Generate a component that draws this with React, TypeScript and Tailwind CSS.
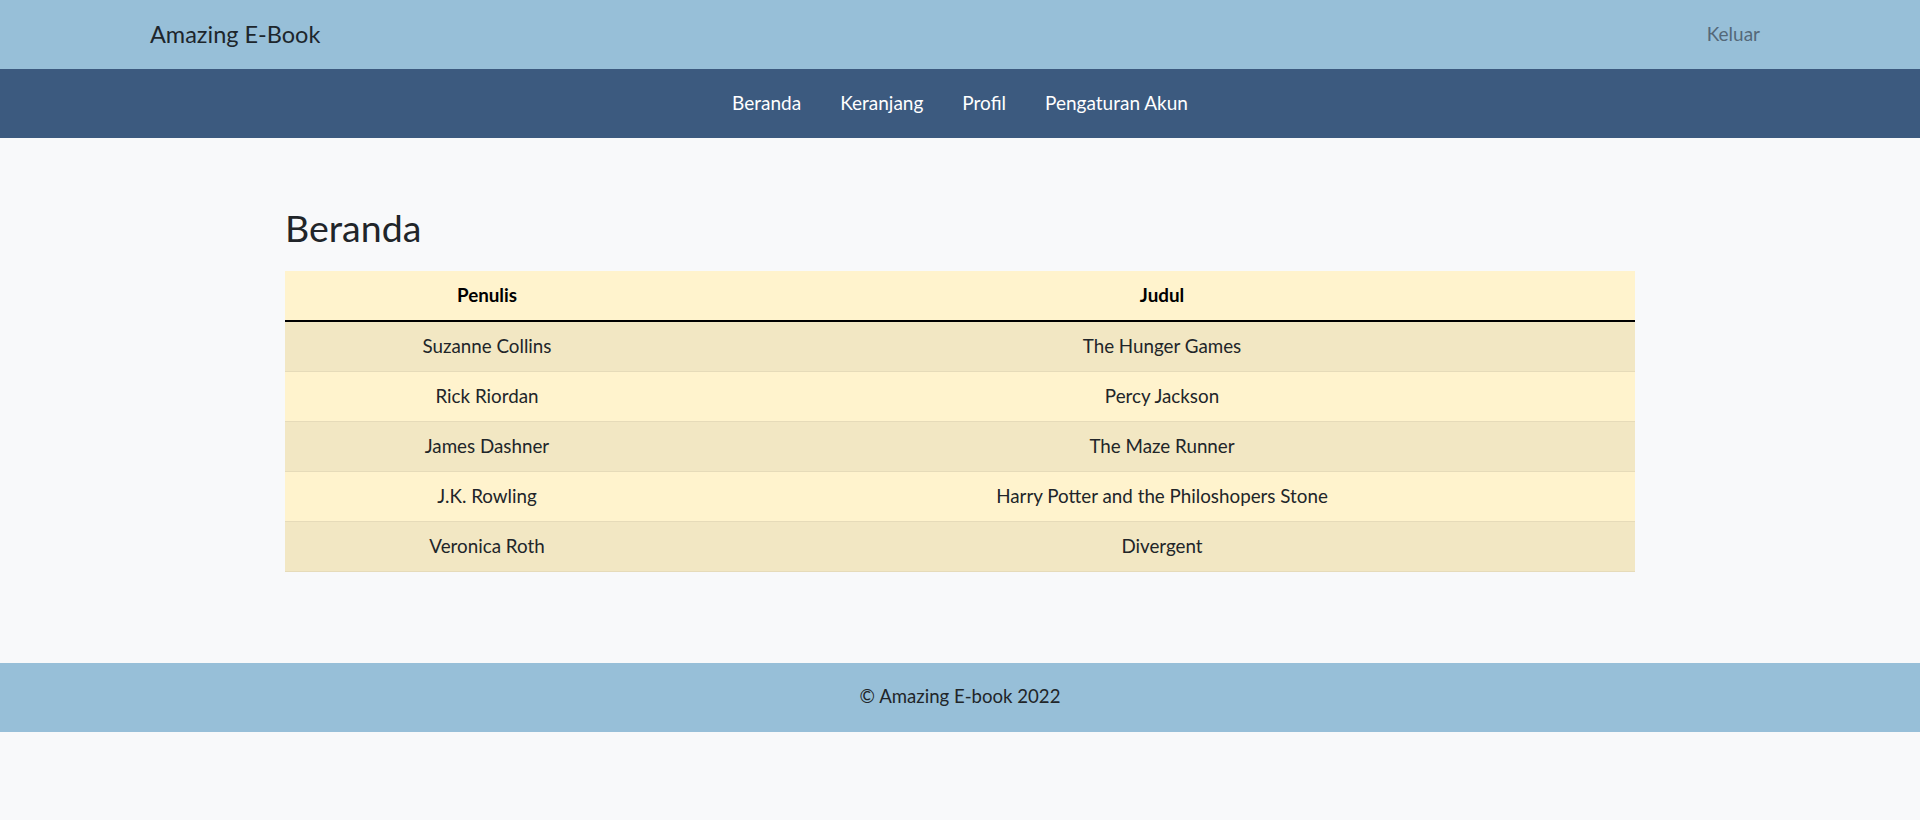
import React from "react";

const rows: [string, string][] = [
  ["Suzanne Collins", "The Hunger Games"],
  ["Rick Riordan", "Percy Jackson"],
  ["James Dashner", "The Maze Runner"],
  ["J.K. Rowling", "Harry Potter and the Philoshopers Stone"],
  ["Veronica Roth", "Divergent"],
];

export default function App() {
  return (
    <div className="min-h-[820px] bg-[#f8f9fa] [font-family:Lato,'Noto_Sans',sans-serif] text-[#212529]">
      <header className="h-[69px] bg-[#97bfd8] flex items-center justify-between pl-[150px] pr-[160px]">
        <span className="text-[23.5px] text-[#1d262c]">Amazing E-Book</span>
        <span className="text-[19px] text-[#546878]">Keluar</span>
      </header>
      <nav className="h-[69px] bg-[#3c5a7f] flex items-center justify-center gap-[39px] text-[19px] text-white">
        <span>Beranda</span>
        <span>Keranjang</span>
        <span>Profil</span>
        <span>Pengaturan Akun</span>
      </nav>
      <main className="w-[1350px] mx-auto pt-[66px]">
        <h2 className="text-[37.5px] leading-[48px] font-normal mb-[19px]">Beranda</h2>
        <table className="w-full table-fixed border-collapse text-[18.8px]">
          <colgroup>
            <col className="w-[404px]" />
            <col />
          </colgroup>
          <thead>
            <tr className="bg-[#fff3cd] text-black">
              <th className="h-[50px] font-bold border-b-2 border-black">Penulis</th>
              <th className="h-[50px] font-bold border-b-2 border-black">Judul</th>
            </tr>
          </thead>
          <tbody>
            {rows.map(([a, b], i) => (
              <tr
                key={a}
                className={
                  i % 2 === 0
                    ? "bg-[#f2e7c3] border-b border-[#e6dbb9]"
                    : "bg-[#fff3cd] border-b border-[#e6dbb9]"
                }
              >
                <td className="h-[50px] text-center">{a}</td>
                <td className="h-[50px] text-center">{b}</td>
              </tr>
            ))}
          </tbody>
        </table>
      </main>
      <footer className="mt-[91px] h-[69px] bg-[#97bfd8] flex items-center justify-center text-[18.6px] text-[#212529]">
        © Amazing E-book 2022
      </footer>
    </div>
  );
}
